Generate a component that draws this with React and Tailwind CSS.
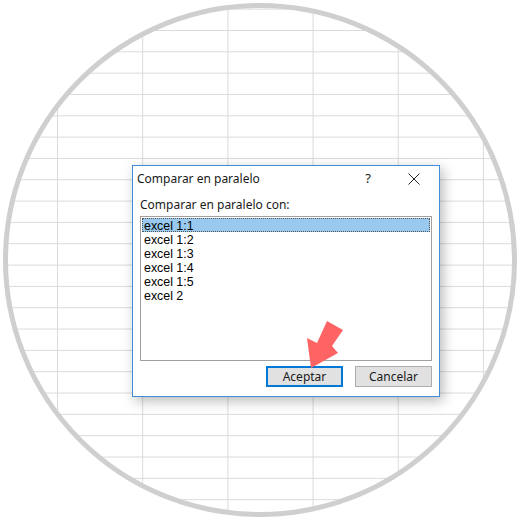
export default function App() {
  const items = ["excel 1:1", "excel 1:2", "excel 1:3", "excel 1:4", "excel 1:5", "excel 2"];
  return (
    <div className="relative w-[520px] h-[520px] bg-white flex items-center justify-center overflow-hidden">
      <div className="w-[514px] h-[514px] rounded-full border-[5px] border-[#cfcfcf] overflow-hidden bg-white bg-[linear-gradient(to_right,#dadada_1px,transparent_1px),linear-gradient(to_bottom,#dadada_1px,transparent_1px)] bg-[size:85.2px_21.33px] bg-[position:49px_0.67px]" />

      <div className="absolute left-[132px] top-[165px] w-[308px] h-[232px] bg-white border border-[#3f8ede] shadow-[3px_4px_12px_rgba(0,0,0,0.28)] flex flex-col font-['Noto_Sans',sans-serif] text-[12px] text-[#1a1a1a]">
        <div className="h-[26px] flex items-center pl-[4px]">
          <span className="flex-1 leading-[16px]">Comparar en paralelo</span>
          <span className="w-[46px] h-[26px] flex items-center justify-center text-[13px]">?</span>
          <span className="w-[46px] h-[26px] mr-[2px] flex items-center justify-center">
            <svg width="12" height="12" viewBox="0 0 12 12">
              <path d="M0.5 0.5 L11.5 11.5 M11.5 0.5 L0.5 11.5" stroke="#222" strokeWidth="1" fill="none" />
            </svg>
          </span>
        </div>
        <div className="mt-[5px] pl-[7px] h-[16px] leading-[16px]">Comparar en paralelo con:</div>
        <div className="mt-[3px] mx-[7px] h-[145px] border border-[#a0a0a0] p-px font-['Liberation_Sans',sans-serif] text-[12.4px] text-black">
          {items.map((it, i) => (
            <div
              key={it}
              className={
                i === 0
                  ? "h-[14px] leading-[16px] pl-[2px] bg-[#99c9ef] outline outline-1 outline-dotted outline-[#555] -outline-offset-1"
                  : "h-[14px] leading-[16px] pl-[2px]"
              }
            >
              {it}
            </div>
          ))}
        </div>
        <div className="mt-[5px] pr-[7px] flex justify-end gap-[12px]">
          <div className="w-[77px] h-[21px] bg-[#e1e1e1] border-2 border-[#0078d7] flex items-center justify-center">
            Aceptar
          </div>
          <div className="w-[77px] h-[21px] bg-[#e1e1e1] border border-[#adadad] flex items-center justify-center">
            Cancelar
          </div>
        </div>
      </div>

      <svg className="absolute left-0 top-0 pointer-events-none" width="520" height="520" viewBox="0 0 520 520">
        <polygon points="327,321 343,330 332,346 338,353 311,368 307,338 317,343" fill="#ff6464" />
      </svg>
    </div>
  );
}
